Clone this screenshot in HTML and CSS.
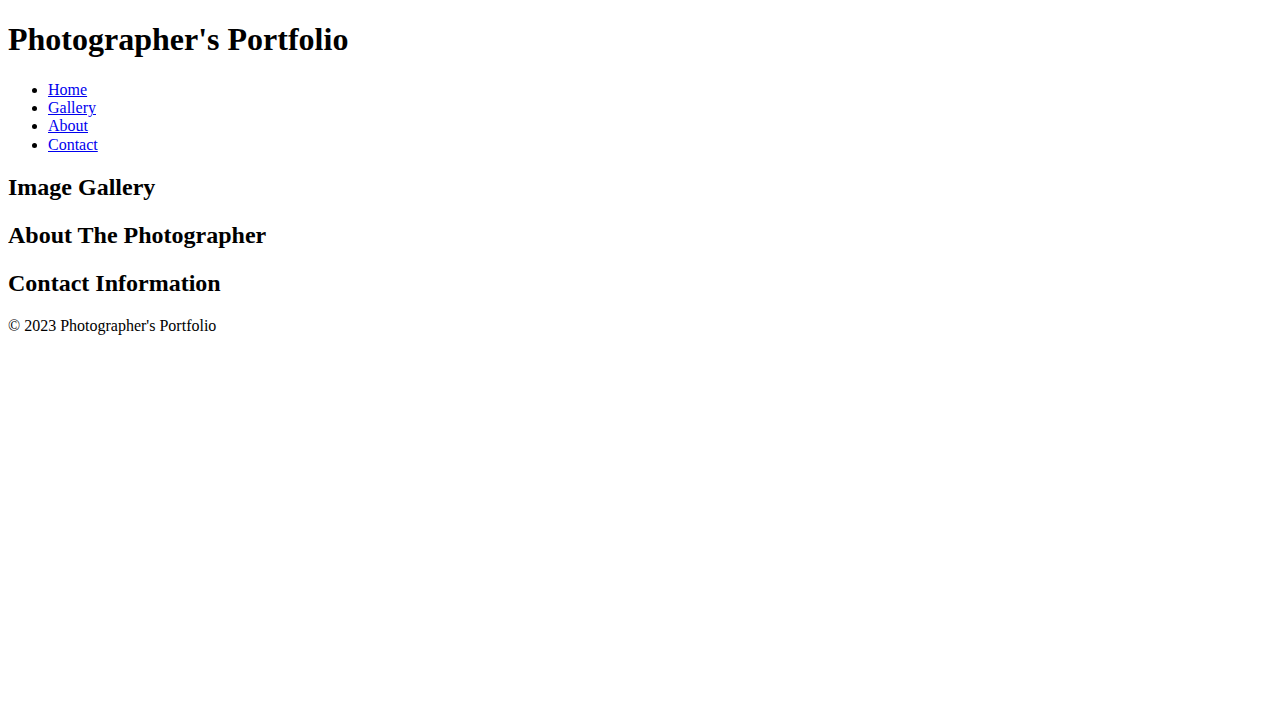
FILE: index.html
```html
<!DOCTYPE html>
<html lang="en">
<head>
<meta charset="utf-8">
<title>Photographer's Portfolio</title>
<link rel="stylesheet" href="styles.css">
</head>
<body class="page">
<header class="site-header">
<h1 class="site-title">Photographer's Portfolio</h1>
<nav class="site-nav">
<ul class="nav-list">
<li><a href="#home">Home</a></li>
<li><a href="#gallery">Gallery</a></li>
<li><a href="#about">About</a></li>
<li><a href="#contact">Contact</a></li>
</ul>
</nav>
</header>
<main class="content">
<section id="gallery" class="section">
<h2 class="section-title">Image Gallery</h2>
</section>
<section id="about" class="section">
<h2 class="section-title">About The Photographer</h2>
</section>
<section id="contact" class="section">
<h2 class="section-title">Contact Information</h2>
</section>
</main>
<footer class="site-footer">
<p class="copyright">&copy; 2023 Photographer's Portfolio</p>
</footer>
</body>
</html>
```
FILE: styles.css
```css
.page {
  margin: 0 8px 8px;
  font-family: "Liberation Serif", "Times New Roman", serif;
  font-size: 16px;
  line-height: 1.149;
  color: #000;
  background: #fff;
}
.site-title {
  font-size: 2em;
  line-height: 1.18;
  margin: 0.67em 0;
  font-weight: bold;
}
.nav-list {
  margin: 1em 0;
  padding-left: 40px;
  list-style: disc;
}
.nav-list a {
  color: #0000ee;
  text-decoration: underline;
}
.section-title {
  font-size: 1.5em;
  line-height: 1.16;
  margin: 0.83em 0;
  font-weight: bold;
}
.copyright {
  margin: 1em 0;
}
```
